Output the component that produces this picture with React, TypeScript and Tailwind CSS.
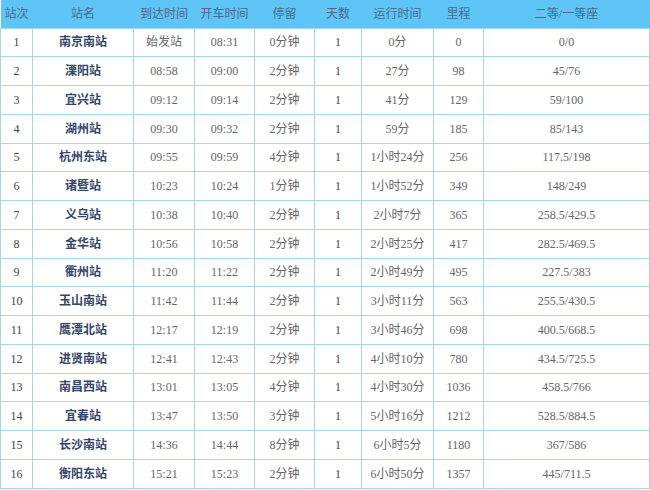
const rows: [string, string, string, string, string, string, string, string, string][] = [
  ["1", "南京南站", "始发站", "08:31", "0分钟", "1", "0分", "0", "0/0"],
  ["2", "溧阳站", "08:58", "09:00", "2分钟", "1", "27分", "98", "45/76"],
  ["3", "宜兴站", "09:12", "09:14", "2分钟", "1", "41分", "129", "59/100"],
  ["4", "湖州站", "09:30", "09:32", "2分钟", "1", "59分", "185", "85/143"],
  ["5", "杭州东站", "09:55", "09:59", "4分钟", "1", "1小时24分", "256", "117.5/198"],
  ["6", "诸暨站", "10:23", "10:24", "1分钟", "1", "1小时52分", "349", "148/249"],
  ["7", "义乌站", "10:38", "10:40", "2分钟", "1", "2小时7分", "365", "258.5/429.5"],
  ["8", "金华站", "10:56", "10:58", "2分钟", "1", "2小时25分", "417", "282.5/469.5"],
  ["9", "衢州站", "11:20", "11:22", "2分钟", "1", "2小时49分", "495", "227.5/383"],
  ["10", "玉山南站", "11:42", "11:44", "2分钟", "1", "3小时11分", "563", "255.5/430.5"],
  ["11", "鹰潭北站", "12:17", "12:19", "2分钟", "1", "3小时46分", "698", "400.5/668.5"],
  ["12", "进贤南站", "12:41", "12:43", "2分钟", "1", "4小时10分", "780", "434.5/725.5"],
  ["13", "南昌西站", "13:01", "13:05", "4分钟", "1", "4小时30分", "1036", "458.5/766"],
  ["14", "宜春站", "13:47", "13:50", "3分钟", "1", "5小时16分", "1212", "528.5/884.5"],
  ["15", "长沙南站", "14:36", "14:44", "8分钟", "1", "6小时5分", "1180", "367/586"],
  ["16", "衡阳东站", "15:21", "15:23", "2分钟", "1", "6小时50分", "1357", "445/711.5"],
];

const headers = ["站次", "站名", "到达时间", "开车时间", "停留", "天数", "运行时间", "里程", "二等/一等座"];
const widths = [32, 101, 61, 60, 60, 47, 72, 50, 166];

export default function App() {
  return (
    <div className="h-[490px] w-[650px] bg-white font-['Liberation_Serif','Noto_Sans_CJK_SC',serif] text-[12px]">
      <table className="w-[649px] table-fixed border-collapse">
        <colgroup>
          {widths.map((w, i) => (
            <col key={i} style={{ width: w }} />
          ))}
        </colgroup>
        <thead>
          <tr className="h-[28px] bg-[#5fc4f6]">
            {headers.map((h) => (
              <th key={h} className="p-0 text-center font-normal text-[#4a6b8c]">
                {h}
              </th>
            ))}
          </tr>
        </thead>
        <tbody>
          {rows.map((r) => (
            <tr key={r[0]} className="h-[28.75px]">
              {r.map((c, i) => (
                <td
                  key={i}
                  className={
                    "border border-[#a6d9e8] p-0 text-center " +
                    (i === 1 ? "font-bold text-[#34456b]" : i === 0 || i === 5 ? "text-[#444]" : "text-[#666]")
                  }
                >
                  {c}
                </td>
              ))}
            </tr>
          ))}
        </tbody>
      </table>
    </div>
  );
}
